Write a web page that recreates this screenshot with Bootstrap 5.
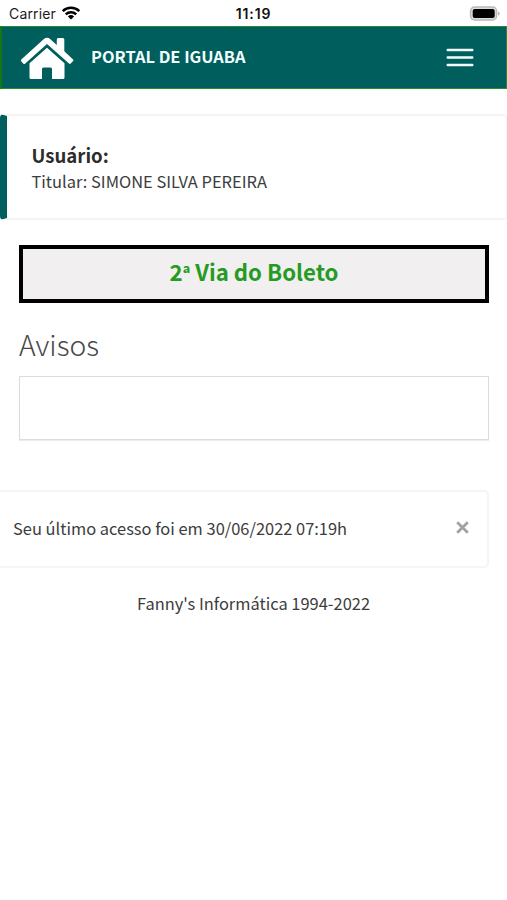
<!DOCTYPE html>
<html lang="pt-BR">
<head>
<meta charset="utf-8">
<meta name="viewport" content="width=device-width, initial-scale=1">
<title>Portal de Iguaba</title>
<link href="https://cdn.jsdelivr.net/npm/bootstrap@5.3.0/dist/css/bootstrap.min.css" rel="stylesheet">
<style>
body{font-family:"Noto Sans CJK SC",sans-serif;color:#3c3c3c;background:#fff;font-size:16.45px;line-height:26px}
.status{height:26px;font:14px/26px Inter,"Liberation Sans",sans-serif;color:#1c1c1c;display:grid;grid-template-columns:1fr auto 1fr;padding-top:1px}
.carrier{letter-spacing:.15px;margin-left:1px}
.wifi{margin:0 0 2px 5px}
.battery{margin-bottom:2px}
.clock{font-weight:600;color:#111;font-size:14px;letter-spacing:.9px}
.portal-bar{height:63px;background:#005e5d;border:1px solid #2c882c;border-left:2px solid #147514;padding:0 32px 0 18px}
.portal-name{font-size:16.4px;font-weight:700;color:#f2ffff;margin-left:17px;padding-bottom:3px}
.user-panel{height:106px;margin-top:25px;border:2px solid #f4f4f4;border-left:7px solid #005e5d;border-right-width:1px;border-radius:4px;padding:26px 24px 24px 24.5px}
.user-title{font-size:18.6px;font-weight:700;line-height:26px;color:#2d2d2d}
.content-block{padding:25px 18px 0 19px}
.boleto{height:58px;border:4px solid #000;background:#f1efef;color:#259b24;font-size:22.2px;font-weight:700;line-height:44px}
.boleto:hover{background:#e9e6e6;color:#1d7e1c}
.ordinal{font-size:.84em}
.avisos-title{font-size:28.3px;font-weight:300;line-height:40px;margin:21px 0 12px;color:#484848}
.avisos-box{height:64px;border:1px solid #dcdcdc;box-shadow:0 1px 1px #eee}
.access{height:78px;margin:50px 18px 0 0;border:2px solid #f5f5f5;border-left:0;border-radius:0 5px 5px 0;padding:0 18px 3px 13px}
.access-close{margin-bottom:4px}
.footer-line{margin-top:22px}
</style>
<script src="https://cdn.jsdelivr.net/npm/bootstrap@5.3.0/dist/js/bootstrap.bundle.min.js"></script>
</head>
<body>
<div class="status">
  <div class="d-flex align-items-center ps-2"><span class="carrier">Carrier</span>
    <svg class="wifi" width="20" height="14" viewBox="0 0 20 14" fill="none" stroke="#000" stroke-width="2.5"><path d="M1.7 5.2a12 12 0 0 1 16.6 0M4.8 8.4a7.5 7.5 0 0 1 10.4 0"/><path d="M10 13.5 6.9 10.5a4.5 4.5 0 0 1 6.2 0z" fill="#000" stroke="none"/></svg>
  </div>
  <span class="clock">11:19</span>
  <div class="d-flex align-items-center justify-content-end pe-1">
    <svg class="battery" width="34" height="15" viewBox="0 0 34 15"><rect x="1.6" y="1" width="26" height="13" rx="4" fill="#ddd" stroke="#b9b9b9" stroke-width="1.5"/><rect x="3.7" y="3" width="22" height="9" rx="2" fill="#000"/><path d="M29.2 5.2q3 2.3 0 4.6z" fill="#a5a5a5"/></svg>
  </div>
</div>
<nav class="portal-bar d-flex align-items-center">
  <svg width="54" height="44" viewBox="0 0 54 44" fill="#fff"><path d="M1.3 23.6 23.6 3.2q3.4-2.7 6.8 0l6.4 5.7V3.5q0-1.5 1.5-1.5h4.5q1.5 0 1.5 1.5v11.8l8.8 8.1q.8.8 0 1.6l-2.4 2.6q-.8.8-1.7 0L27 8.1 5 27.7q-.9.8-1.6 0L1.2 25.2q-.7-.9.1-1.6z"/><path d="M27 11.7 44.5 27.2V41.5q0 1.5-1.5 1.5H32V33q0-1.500-1.500-1.500h-7Q22 31.500 22 33v10H11q-1.500 0-1.500-1.500V27.200z"/></svg>
  <span class="portal-name">PORTAL DE IGUABA</span>
  <button class="btn p-0 border-0 ms-auto lh-1" type="button" aria-label="Menu"><svg width="28" height="20" viewBox="0 0 28 20" stroke="#f2ffff" stroke-width="2.4" stroke-linecap="round"><path d="M1.700 2h24.600M1.700 9.500h24.600M1.700 17h24.600"/></svg></button>
</nav>
<main>
  <section class="user-panel">
    <div class="user-title"><span>Usuário:</span></div>
    <div><span class="holder">Titular: SIMONE SILVA PEREIRA</span></div>
  </section>
  <div class="content-block">
    <a class="boleto d-block text-center text-decoration-none" href="#">2<span class="ordinal">ª</span> Via do Boleto</a>
    <h2 class="avisos-title"><span>Avisos</span></h2>
    <div class="avisos-box"></div>
  </div>
  <div class="access d-flex align-items-center justify-content-between" id="access">
    <span>Seu último acesso foi em 30/06/2022 07:19h</span>
    <button class="btn access-close p-0 border-0 lh-1" type="button" aria-label="Fechar"><svg width="13" height="13" viewBox="0 0 13 13" stroke="#a2a2a2" stroke-width="2.800"><path d="m1.200 1.200 10.600 10.600m0-10.600-10.600 10.600"/></svg></button>
  </div>
</main>
<footer class="footer-line text-center"><span>Fanny's Informática 1994-2022</span></footer>
</body>
</html>
